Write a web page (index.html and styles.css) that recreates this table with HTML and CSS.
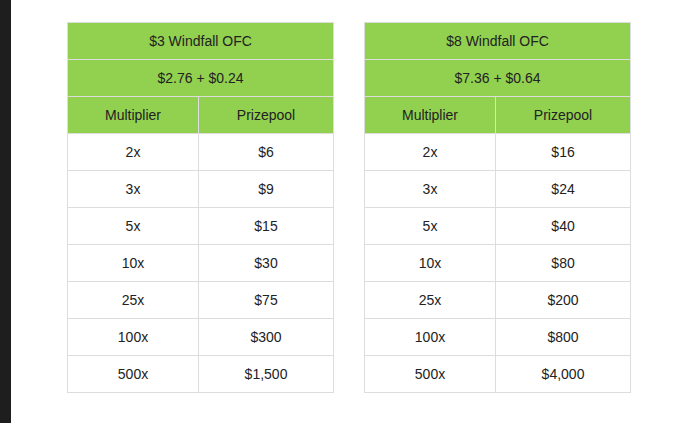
FILE: index.html
```html
<!DOCTYPE html>
<html>
<head>
<meta charset="utf-8">
<link rel="stylesheet" href="styles.css">
</head>
<body>
<div class="layout">
  <div class="sidebar"></div>
  <div class="content">
    <table class="prize">
      <colgroup><col class="c1"><col class="c2"></colgroup>
      <tr class="head"><td colspan="2">$3 Windfall OFC</td></tr>
      <tr class="head"><td colspan="2">$2.76 + $0.24</td></tr>
      <tr class="head"><td>Multiplier</td><td>Prizepool</td></tr>
      <tr><td>2x</td><td>$6</td></tr>
      <tr><td>3x</td><td>$9</td></tr>
      <tr><td>5x</td><td>$15</td></tr>
      <tr><td>10x</td><td>$30</td></tr>
      <tr><td>25x</td><td>$75</td></tr>
      <tr><td>100x</td><td>$300</td></tr>
      <tr><td>500x</td><td>$1,500</td></tr>
    </table>
    <table class="prize">
      <colgroup><col class="c1"><col class="c2"></colgroup>
      <tr class="head"><td colspan="2">$8 Windfall OFC</td></tr>
      <tr class="head"><td colspan="2">$7.36 + $0.64</td></tr>
      <tr class="head"><td>Multiplier</td><td>Prizepool</td></tr>
      <tr><td>2x</td><td>$16</td></tr>
      <tr><td>3x</td><td>$24</td></tr>
      <tr><td>5x</td><td>$40</td></tr>
      <tr><td>10x</td><td>$80</td></tr>
      <tr><td>25x</td><td>$200</td></tr>
      <tr><td>100x</td><td>$800</td></tr>
      <tr><td>500x</td><td>$4,000</td></tr>
    </table>
  </div>
</div>
</body>
</html>
```
FILE: styles.css
```css
html, body {
  margin: 0;
  padding: 0;
  background: #ffffff;
  font-family: "Liberation Sans", Arial, sans-serif;
  font-size: 14px;
  color: #222222;
}
.layout {
  display: flex;
  height: 423px;
}
.sidebar {
  width: 11px;
  background: #1e1e1e;
  flex: none;
}
.content {
  display: flex;
  align-items: flex-start;
  gap: 30px;
  padding: 22px 0 0 56px;
}
.prize {
  border-collapse: collapse;
  width: 266px;
  table-layout: fixed;
}
.prize .c1 { width: 131px; }
.prize .c2 { width: 135px; }
.prize td {
  border: 1px solid #dddddd;
  height: 36px;
  padding: 0;
  text-align: center;
  vertical-align: middle;
}
.prize .head td {
  background: #92d050;
}
```
